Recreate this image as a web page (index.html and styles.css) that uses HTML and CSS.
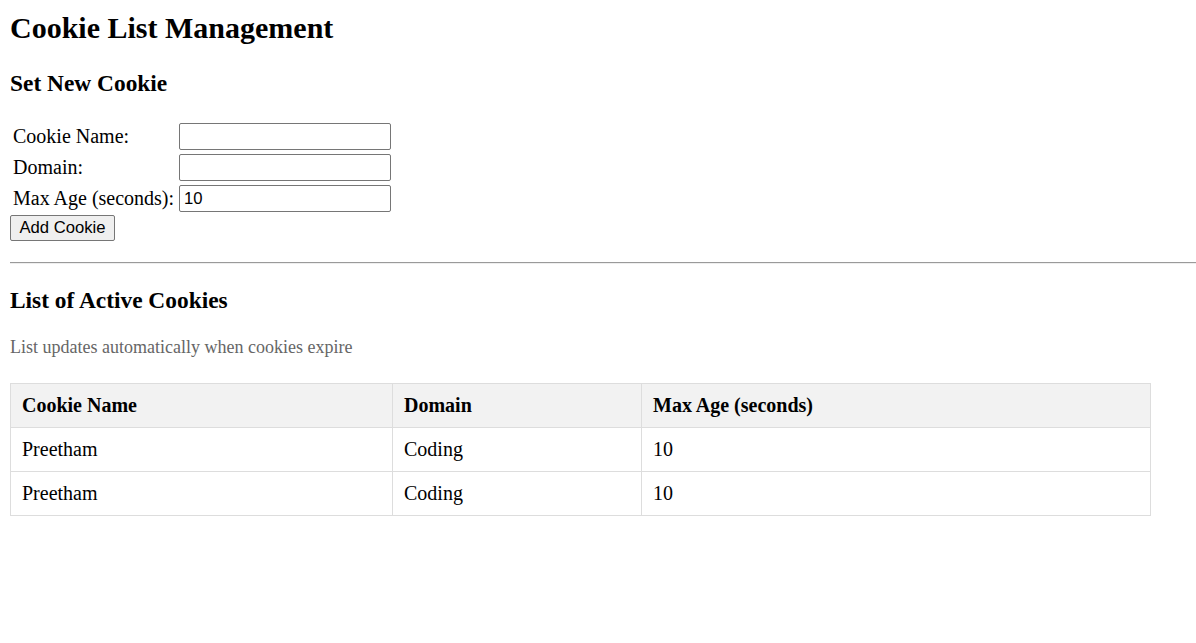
FILE: index.html
```html
<!DOCTYPE html>
<html>
<head>
<meta charset="utf-8">
<title>Cookie List Management</title>
<link rel="stylesheet" href="styles.css">
</head>
<body>
<h1 class="title">Cookie List Management</h1>
<h3 class="section-title">Set New Cookie</h3>
<table class="form-table">
  <tr><td class="label-cell"><label for="name">Cookie Name:</label></td><td><input id="name" class="field" type="text"></td></tr>
  <tr><td class="label-cell"><label for="domain">Domain:</label></td><td><input id="domain" class="field" type="text"></td></tr>
  <tr><td class="label-cell"><label for="age">Max Age (seconds):</label></td><td><input id="age" class="field" type="text" value="10"></td></tr>
</table>
<button class="add-btn" type="button">Add Cookie</button>
<hr class="divider">
<h3 class="section-title list-title">List of Active Cookies</h3>
<p class="note">List updates automatically when cookies expire</p>
<table class="cookie-table">
  <colgroup><col class="c1"><col class="c2"><col class="c3"></colgroup>
  <thead>
    <tr><th>Cookie Name</th><th>Domain</th><th>Max Age (seconds)</th></tr>
  </thead>
  <tbody>
    <tr><td>Preetham</td><td>Coding</td><td>10</td></tr>
    <tr><td>Preetham</td><td>Coding</td><td>10</td></tr>
  </tbody>
</table>
</body>
</html>
```
FILE: styles.css
```css
html, body {
  background: #fff;
}
body {
  margin: 0;
  padding: 10px 0 0 10px;
  font-family: "Liberation Serif", "Times New Roman", serif;
  font-size: 20px;
  color: #000;
}
.title {
  font-size: 30px;
  font-weight: bold;
  margin: 0;
  line-height: 36px;
}
.section-title {
  font-size: 23.4px;
  font-weight: bold;
  margin: 23px 0 0;
  line-height: 28px;
}
.form-table {
  border-collapse: separate;
  border-spacing: 2px;
  margin: 23px 0 0 0;
}
.form-table td {
  padding: 1px;
  font-size: 20px;
  vertical-align: middle;
}
.form-table .label-cell {
  padding-right: 2px;
}
.field {
  box-sizing: border-box;
  width: 212px;
  height: 27px;
  border: 1px solid #767676;
  border-radius: 2px;
  padding: 1px 4px;
  font-family: "Liberation Sans", Arial, sans-serif;
  font-size: 16.67px;
  margin: 0;
  display: block;
}
.add-btn {
  box-sizing: border-box;
  height: 26px;
  width: 105px;
  padding: 0;
  margin: 0;
  font-family: "Liberation Sans", Arial, sans-serif;
  font-size: 16.67px;
  background: #efefef;
  border: 1px solid #767676;
  border-radius: 2px;
  color: #000;
  display: block;
}
.divider {
  margin: 21px 0 0 0;
  border: 0;
  border-top: 1px solid #9a9a9a;
  border-bottom: 1px solid #eee;
  height: 0;
}
.list-title {
  margin-top: 22px;
}
.note {
  color: #666;
  font-size: 18px;
  margin: 22px 0 0;
  line-height: 22px;
}
.cookie-table {
  border-collapse: collapse;
  width: 1140px;
  margin-top: 25px;
  table-layout: fixed;
}
.c1 { width: 382px; }
.c2 { width: 249px; }
.c3 { width: 509px; }
.cookie-table th,
.cookie-table td {
  border: 1px solid #ddd;
  padding: 0 11px;
  height: 43px;
  text-align: left;
  font-size: 20px;
}
.cookie-table th {
  background: #f2f2f2;
  font-weight: bold;
}
```
